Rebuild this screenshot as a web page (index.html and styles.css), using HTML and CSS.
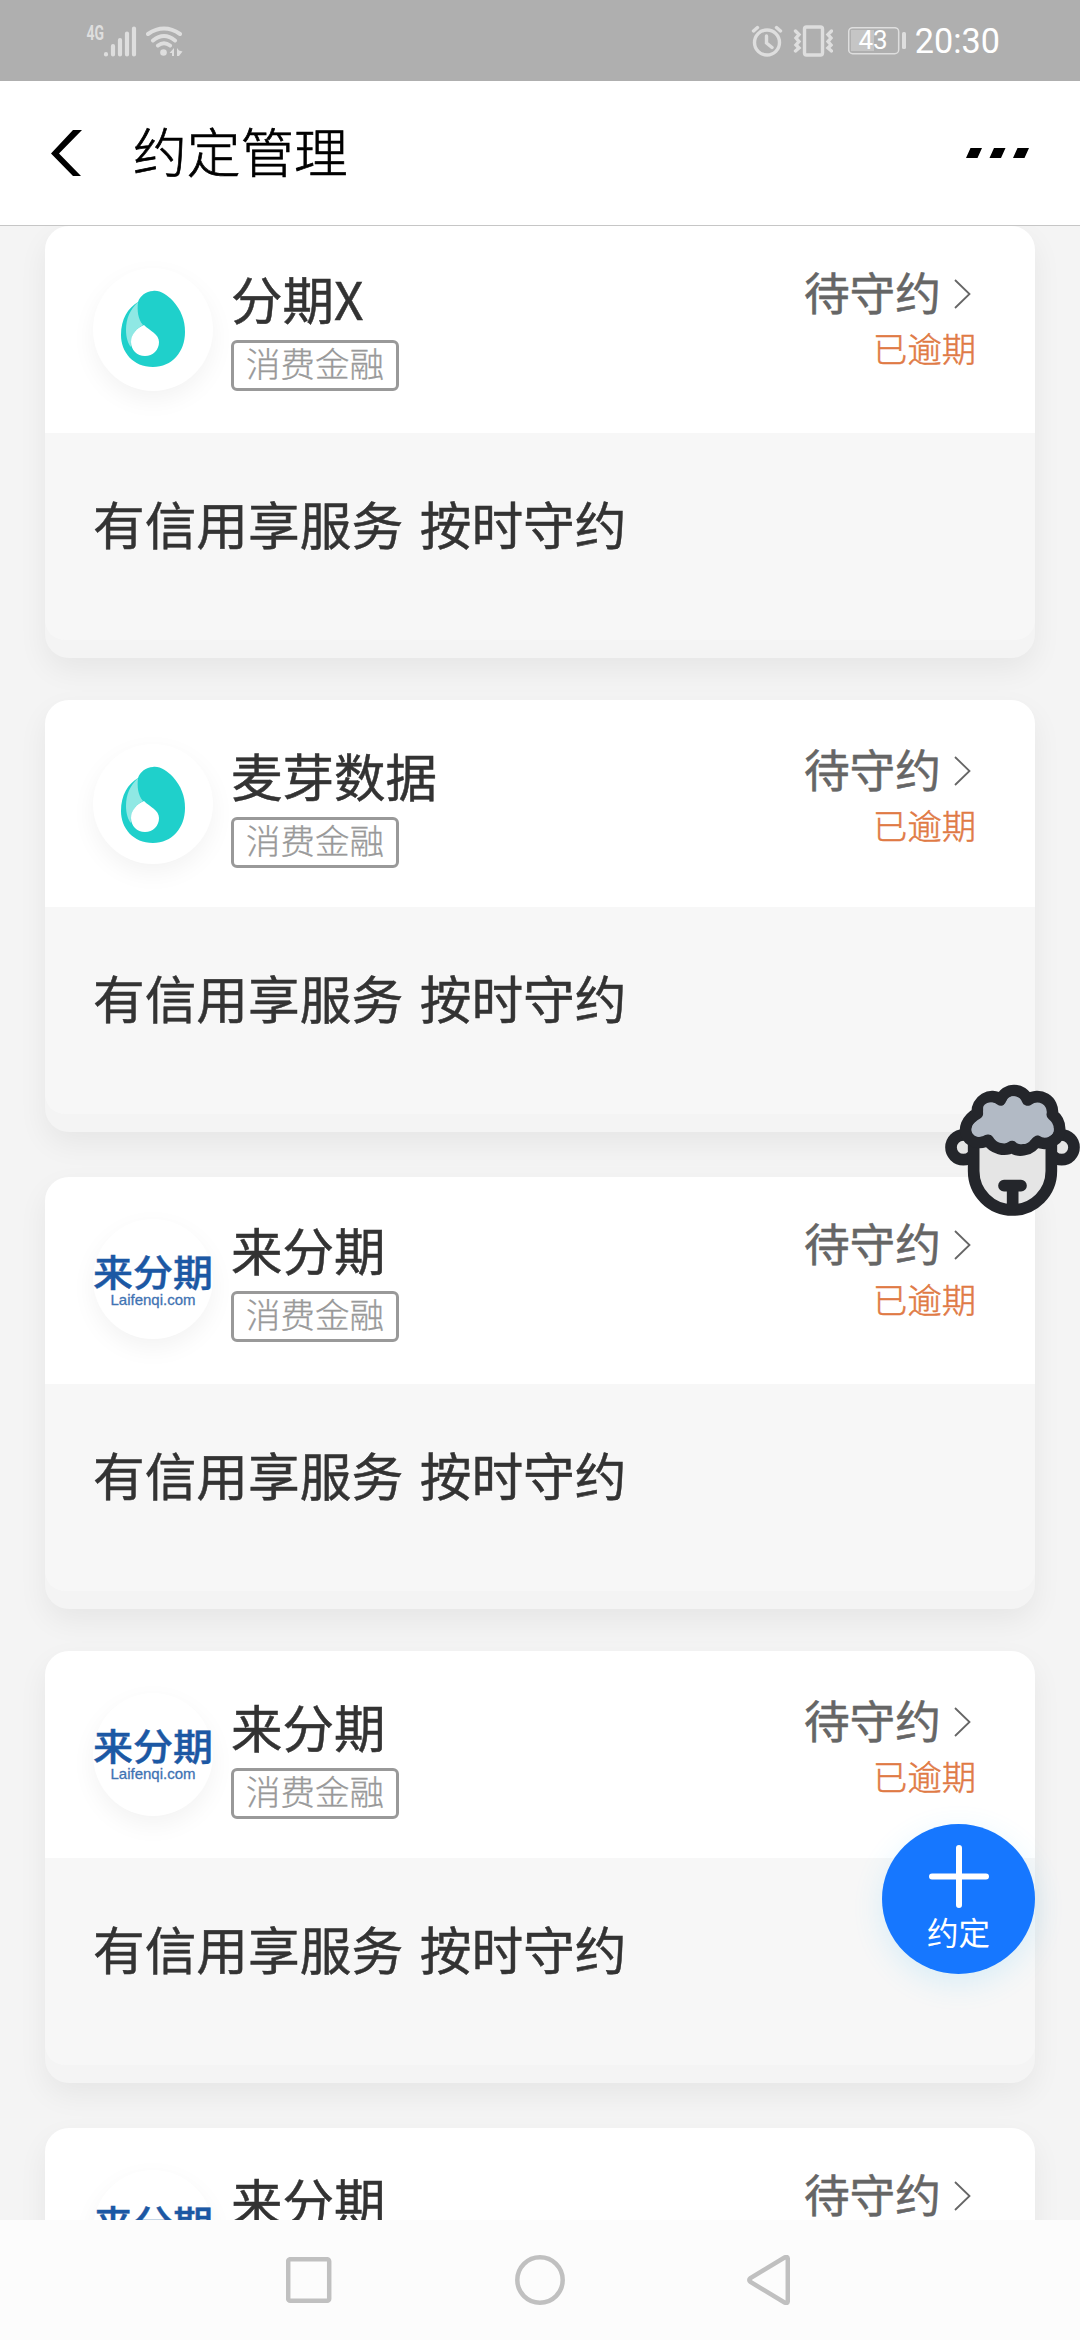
FILE: index.html
```html
<!DOCTYPE html>
<html lang="zh-CN">
<head>
<meta charset="utf-8">
<title>约定管理</title>
<link rel="stylesheet" href="styles.css">
</head>
<body>
<svg width="0" height="0" class="defs">
  <symbol id="drop" viewBox="0 0 120 120">
    <path fill="#1fd0cb" d="M60 23C67 22 74 27 80 33C88 42 92 52 92 64C92 84 79 99 60 99C40 99 28 84 28 67C28 51 35 40 45 34C47 28 53 23 60 23Z"/>
    <path fill="#8fe8e4" d="M45 34C37 42 33 50 33 62C33 69 35 76 38 79C37 69 42 61 50 57C45 51 44 43 45 34Z"/>
    <path fill="#fff" d="M51 57C57 63 66 66 66 74C66 82 60 88 52 88C44 88 38 82 38 74C38 66 44 60 51 57Z"/>
  </symbol>
  <symbol id="chevron" viewBox="0 0 17 30"><path d="M1 1L15.500 15L1 29" fill="none" stroke="#666" stroke-width="1.800"/></symbol>
</svg>

<div class="screen">
  <div class="status-bar">
    <svg class="signal" width="98" height="36" viewBox="86 22 98 36">
      <text class="net" x="86.500" y="39" textLength="17.500" lengthAdjust="spacingAndGlyphs">4G</text>
      <g stroke="#dedede" stroke-width="4.200" stroke-linecap="round">
        <path d="M106 53.200V53.400M113 45V53.400M120 39V53.400M127 32.500V53.400M134 27.500V53.400"/>
      </g>
      <g fill="none" stroke="#dedede" stroke-width="4" stroke-linecap="round">
        <path d="M148 33Q164 22 180 33M153 39.500Q164 30.500 175 39.500M158 44.500Q164 40 170 44.500"/>
      </g>
      <circle cx="163.500" cy="51.500" r="3.300" fill="#dedede"/>
      <path fill="#dedede" d="M174 47V55H172V52H169.500ZM177 47L179 49.500L182.500 50.500L179 55H177Z"/>
    </svg>
    <div class="status-right">
      <svg width="82" height="36" viewBox="750 22 82 36" fill="none" stroke="#dedede" stroke-width="3.400" stroke-linecap="round">
        <circle cx="766" cy="41.500" r="12.500"/>
        <path d="M765.500 35V42L771 46.500M752.500 30L756.500 26.500M779.500 30L775.500 26.500"/>
        <rect x="803.500" y="26" width="18" height="28" rx="2"/>
        <path d="M794.500 30L798 33.500L795 37L798 40.500L795 44L798 47L794.500 50M830.500 30L827 33.500L830 37L827 40.500L830 44L827 47L830.500 50"/>
      </svg>
      <svg class="battery" width="59" height="28" viewBox="847 27 59 28">
        <rect x="850" y="30" width="23" height="21" fill="#c5c5c5"/>
        <rect x="847.700" y="27.700" width="50" height="26" rx="4" fill="none" stroke="#dedede" stroke-width="1.500"/>
        <rect x="901" y="32" width="4" height="17" rx="1.500" fill="#dedede"/>
        <text class="percent" x="857.500" y="49">43</text>
      </svg>
      <span class="clock">20:30</span>
    </div>
  </div>

  <div class="title-bar">
    <svg width="32" height="46" viewBox="0 0 32 46"><path d="M31 0H22L0 23.500L22 46H30L8 23.500Z"/></svg>
    <h1 class="title">约定管理</h1>
    <svg class="more" width="63" height="10" viewBox="0 0 63 10"><path d="M4.500 0H16L11.500 10H0ZM28 0H39.500L35 10H23.500ZM51.500 0H63L58.500 10H47Z"/></svg>
  </div>

  <div class="list">
    <article class="card">
      <div class="card-head">
        <div class="avatar tall"><svg width="120" height="120"><use href="#drop"/></svg></div>
        <div class="info"><h2 class="name">分期X</h2><span class="tag">消费金融</span></div>
        <div class="state"><div class="pending">待守约<svg class="arrow" width="17" height="30"><use href="#chevron"/></svg></div><div class="overdue">已逾期</div></div>
      </div>
      <div class="card-body">有信用享服务 按时守约</div>
    </article>
    <article class="card">
      <div class="card-head">
        <div class="avatar low"><svg width="120" height="120"><use href="#drop"/></svg></div>
        <div class="info"><h2 class="name">麦芽数据</h2><span class="tag">消费金融</span></div>
        <div class="state"><div class="pending">待守约<svg class="arrow" width="17" height="30"><use href="#chevron"/></svg></div><div class="overdue">已逾期</div></div>
      </div>
      <div class="card-body">有信用享服务 按时守约</div>
    </article>
    <article class="card">
      <div class="card-head">
        <div class="avatar"><div class="brand">来分期</div><div class="site">Laifenqi.com</div></div>
        <div class="info"><h2 class="name">来分期</h2><span class="tag">消费金融</span></div>
        <div class="state"><div class="pending">待守约<svg class="arrow" width="17" height="30"><use href="#chevron"/></svg></div><div class="overdue">已逾期</div></div>
      </div>
      <div class="card-body">有信用享服务 按时守约</div>
    </article>
    <article class="card">
      <div class="card-head">
        <div class="avatar tall"><div class="brand">来分期</div><div class="site">Laifenqi.com</div></div>
        <div class="info"><h2 class="name">来分期</h2><span class="tag">消费金融</span></div>
        <div class="state"><div class="pending">待守约<svg class="arrow" width="17" height="30"><use href="#chevron"/></svg></div><div class="overdue">已逾期</div></div>
      </div>
      <div class="card-body">有信用享服务 按时守约</div>
    </article>
    <article class="card">
      <div class="card-head">
        <div class="avatar"><div class="brand">来分期</div></div>
        <div class="info"><h2 class="name">来分期</h2></div>
        <div class="state"><div class="pending">待守约<svg class="arrow" width="17" height="30"><use href="#chevron"/></svg></div></div>
      </div>
    </article>
  </div>

  <div class="nav-bar">
    <svg width="46" height="46" viewBox="0 0 46 46"><rect x="2.200" y="2.200" width="41" height="41.500" rx="2"/></svg>
    <svg width="50" height="50" viewBox="0 0 50 50"><circle cx="25" cy="25" r="22.700"/></svg>
    <svg width="43" height="50" viewBox="0 0 43 50"><path d="M37.500 2.500Q40.800 1 40.800 4V46Q40.800 49 37.500 47.500L3.500 27Q1 25 3.500 23Z"/></svg>
  </div>

  <svg class="sheep" width="160" height="180" viewBox="0 0 480 540">
    <g fill="#e5e5e5" stroke="#24262b" stroke-width="35">
      <circle cx="130" cy="262" r="37"/><circle cx="425" cy="262" r="37"/>
      <path d="M161 230V333A116.500 117 0 0 0 394 333V230Z"/>
    </g>
    <path fill="#b2bac5" stroke="#24262b" stroke-width="35" stroke-linejoin="round" d="M172 160C168 122 212 94 243 120C256 82 308 82 323 120C358 94 403 122 397 164C425 185 427 228 398 243C383 253 363 252 348 242C334 272 292 278 276 260C257 275 219 267 204 240C188 251 156 250 143 230C129 208 140 178 172 160Z"/>
    <path fill="#b2bac5" d="M190 148C184 126 226 120 231 138C252 144 254 130 263 116C272 104 292 106 300 124C310 150 326 142 340 132C362 124 386 144 377 164C372 192 393 190 400 205C405 222 388 234 370 230C350 218 339 232 328 245C312 258 296 250 288 240Q276 230 266 240C248 254 230 248 222 232C206 214 192 228 177 231C154 230 147 200 166 187C192 180 192 168 190 148Z"/>
    <path fill="none" stroke="#24262b" stroke-width="35" stroke-linecap="round" d="M252 377H303M278 377V435"/>
  </svg>

  <button class="fab">
    <svg width="60" height="63" viewBox="0 0 60 63"><path d="M30 3V60M3 31.500H57" stroke="#fff" stroke-width="6" stroke-linecap="round"/></svg>
    <span>约定</span>
  </button>
</div>
</body>
</html>
```

FILE: styles.css
```css
* { box-sizing: border-box; }
body {
  margin: 0;
  font-family: "Noto Sans CJK SC", sans-serif;
  color: #333;
}
.defs { position: absolute; }
h1, h2 { margin: 0; font-weight: 400; }
svg { display: block; flex: none; }

.screen {
  position: relative;
  display: flex;
  flex-direction: column;
  width: 1080px;
  height: 2340px;
  overflow: hidden;
  background: #f4f4f4;
}

.status-bar {
  flex: none;
  height: 81px;
  padding: 0 80px 0 86px;
  display: flex;
  justify-content: space-between;
  align-items: center;
  background: #afafaf;
}
.net { font: 700 20px Roboto, sans-serif; fill: #dedede; }
.percent { font: 26px Roboto, sans-serif; fill: #fff; }
.status-right { display: flex; align-items: center; }
.battery { margin-left: 15px; }
.clock {
  margin-left: 8px;
  font: 34.200px/40px Roboto, sans-serif;
  color: #fff;
}

.title-bar {
  flex: none;
  height: 145px;
  padding: 0 51px 0 51px;
  display: flex;
  align-items: center;
  background: #fff;
  border-bottom: 1px solid #c6c6c6;
}
.title {
  margin-left: 50px;
  padding-bottom: 7px;
  font-size: 53.700px;
  line-height: 80px;
  font-weight: 300;
  -webkit-text-stroke: .7px #000;
  color: #000;
}
.more { margin-left: auto; }

.list {
  flex: 1;
  min-height: 0;
  padding: 0 45px;
  overflow: hidden;
}
.card {
  height: 432px;
  margin-bottom: 42px;
  border-radius: 24px;
  overflow: hidden;
  background: #f4f4f4;
  box-shadow: 0 12px 30px rgba(0, 0, 0, .06);
}
.card:nth-child(even) { margin-bottom: 45px; }
.card:nth-child(even) .info,
.card:nth-child(even) .state { margin-top: 3px; }
.card-head {
  height: 207px;
  padding: 42px 60px 0 48px;
  display: flex;
  align-items: flex-start;
  background: #fff;
}
.avatar {
  flex: none;
  width: 120px;
  height: 120px;
  display: flex;
  flex-direction: column;
  align-items: center;
  border-radius: 50%;
  background: #fff;
  box-shadow: 0 9px 24px rgba(0, 0, 0, .05);
  white-space: nowrap;
}
.avatar.tall { height: 123px; }
.avatar.low { margin-top: 2px; }
.brand {
  margin-top: 32px;
  font-size: 40px;
  line-height: 40px;
  font-weight: 500;
  -webkit-text-stroke: .5px #1c58a4;
  color: #1c58a4;
  transform: scaleY(.93);
}
.site {
  font: 15px/18px "Liberation Sans", sans-serif;
  -webkit-text-stroke: .3px #3f73b3;
  color: #3f73b3;
}
.info { margin-left: 18px; display: flex; flex-direction: column; align-items: flex-start; }
.name { height: 72px; font-size: 51.500px; line-height: 60px; -webkit-text-stroke: .5px #333; }
.tag {
  height: 51px;
  padding: 0 12px;
  border: 3px solid #999;
  border-radius: 6px;
  font-size: 34.500px;
  line-height: 39px;
  font-weight: 300;
  -webkit-text-stroke: .3px #999;
  color: #999;
}
.state { margin-left: auto; color: #666; }
.pending {
  display: flex;
  align-items: flex-start;
  justify-content: flex-end;
  height: 52px;
  font-size: 45.700px;
  line-height: 47px;
  -webkit-text-stroke: .5px #666;
}
.arrow { margin: 11px 4px 0 13px; }
.overdue {
  margin: 3px -1px 0 0;
  text-align: right;
  font-size: 34.300px;
  line-height: 48px;
  font-weight: 300;
  -webkit-text-stroke: .5px #e07a45;
  color: #e07a45;
}
.card-body {
  height: 207px;
  padding: 51px 48px 0;
  border-radius: 0 0 20px 20px;
  background: #f7f7f7;
  font-size: 51.700px;
  line-height: 78px;
  word-spacing: 5px;
  -webkit-text-stroke: .5px #333;
}

.nav-bar {
  flex: none;
  height: 120px;
  padding: 0 290px 0 286px;
  display: flex;
  justify-content: space-between;
  align-items: center;
  background: #fcfcfc;
}
.nav-bar svg { fill: none; stroke: #c0c0c0; stroke-width: 4.500; }

.sheep { position: absolute; left: 920px; top: 1060px; }
.fab {
  position: absolute;
  left: 882px;
  top: 1824px;
  width: 153px;
  height: 150px;
  padding: 21px 0 0;
  border: 0;
  border-radius: 50%;
  display: flex;
  flex-direction: column;
  align-items: center;
  background: #1677ff;
  box-shadow: 0 9px 30px rgba(60, 190, 255, .16);
  font: 31.500px/46px "Noto Sans CJK SC", sans-serif;
  color: #fff;
}
```
